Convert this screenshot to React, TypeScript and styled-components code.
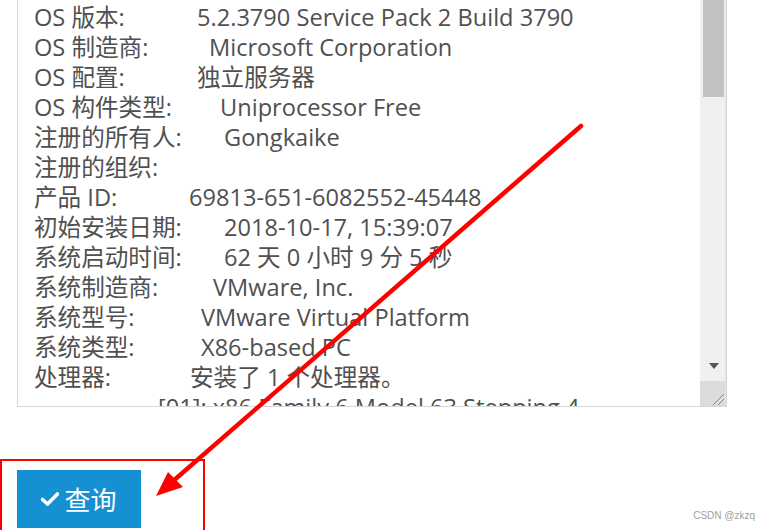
import React from "react";
import styled, { createGlobalStyle } from "styled-components";

const Global = createGlobalStyle`
  html, body { margin: 0; padding: 0; background: #fff; overflow: hidden; }
  body { width: 769px; height: 530px; }
`;

const Page = styled.div`
  position: relative;
  width: 769px;
  height: 530px;
  display: flex;
  flex-direction: column;
  font-family: "Open Sans", "Noto Sans CJK SC", sans-serif;
`;

const Panel = styled.div`
  box-sizing: border-box;
  margin-left: 17px;
  width: 710px;
  height: 407px;
  border: 1px solid #d6d6d6;
  border-top: 0;
  display: flex;
  background: #fff;
`;

const Lines = styled.div`
  flex: 1;
  overflow: hidden;
  padding: 2px 0 0 16px;
  color: #505050;
  font-size: 23.6px;
  line-height: 30px;
`;

const Row = styled.div`
  display: flex;
  white-space: nowrap;
  height: 30px;
`;

const Label = styled.span<{ $w: number }>`
  flex: 0 0 ${(p) => p.$w}px;
`;

const Value = styled.span``;

const Track = styled.div`
  width: 26px;
  background: #f0f0f0;
  display: flex;
  flex-direction: column;
  border-right: 1px solid #e3e3e3;
  box-sizing: border-box;
`;

const Thumb = styled.div`
  margin-left: 3px;
  width: 21px;
  height: 97px;
  background: #c1c1c1;
`;

const Spacer = styled.div`
  flex: 1;
`;

const ArrowBtn = styled.div`
  height: 20px;
  margin-bottom: 5px;
  display: flex;
  align-items: center;
  justify-content: center;
  padding-left: 2px;
`;

const Grip = styled.div`
  height: 25px;
  background: #dcdcdc;
  display: flex;
  align-items: flex-end;
  justify-content: flex-end;
`;

const ActionArea = styled.div`
  margin-top: 52px;
  box-sizing: border-box;
  width: 205px;
  height: 90px;
  border: 2px solid #ff0000;
  border-bottom: 0;
  padding: 9px 0 0 15px;
`;

const QueryButton = styled.button`
  width: 124px;
  height: 58px;
  border: 0;
  background: #1590d2;
  color: #fff;
  font-family: "Open Sans", "Noto Sans CJK SC", sans-serif;
  font-size: 26px;
  display: flex;
  align-items: center;
  justify-content: center;
  gap: 5px;
  padding: 0 0 0 0;
  cursor: pointer;
`;

const Overlay = styled.svg`
  position: absolute;
  left: 0;
  top: 0;
  pointer-events: none;
`;

const Watermark = styled.div`
  position: absolute;
  right: 14px;
  bottom: 9px;
  font-family: "Liberation Sans", sans-serif;
  font-size: 10px;
  color: #a0a0a0;
`;

const rows: [string, number, string][] = [
  ["OS 版本:", 163, "5.2.3790 Service Pack 2 Build 3790"],
  ["OS 制造商:", 175, "Microsoft Corporation"],
  ["OS 配置:", 163, "独立服务器"],
  ["OS 构件类型:", 186, "Uniprocessor Free"],
  ["注册的所有人:", 190, "Gongkaike"],
  ["注册的组织:", 190, ""],
  ["产品 ID:", 155, "69813-651-6082552-45448"],
  ["初始安装日期:", 190, "2018-10-17, 15:39:07"],
  ["系统启动时间:", 190, "62 天 0 小时 9 分 5 秒"],
  ["系统制造商:", 179, "VMware, Inc."],
  ["系统型号:", 167, "VMware Virtual Platform"],
  ["系统类型:", 167, "X86-based PC"],
  ["处理器:", 156, "安装了 1 个处理器。"],
  ["", 124, "[01]: x86 Family 6 Model 63 Stepping 4"],
];

export default function App() {
  return (
    <Page>
      <Global />
      <Panel>
        <Lines>
          {rows.map(([l, w, v], i) => (
            <Row key={i}>
              <Label $w={w}>{l}</Label>
              <Value>{v}</Value>
            </Row>
          ))}
        </Lines>
        <Track>
          <Thumb />
          <Spacer />
          <ArrowBtn>
            <svg width="10" height="6" viewBox="0 0 10 6">
              <polygon points="0,0 10,0 5,6" fill="#555" />
            </svg>
          </ArrowBtn>
          <Grip>
            <svg width="14" height="14" viewBox="0 0 14 14">
              <line x1="2" y1="13" x2="13" y2="2" stroke="#888" strokeWidth="1" />
              <line x1="7" y1="13" x2="13" y2="7" stroke="#888" strokeWidth="1" />
            </svg>
          </Grip>
        </Track>
      </Panel>
      <ActionArea>
        <QueryButton>
          <svg width="18" height="14" viewBox="0 0 18 14">
            <path d="M1.5 7.5 L6.5 12 L16.5 2" fill="none" stroke="#fff" strokeWidth="3.6" strokeLinecap="round" strokeLinejoin="round" />
          </svg>
          查询
        </QueryButton>
      </ActionArea>
      <Overlay width="769" height="530" viewBox="0 0 769 530">
        <line x1="581" y1="126" x2="172" y2="482" stroke="#ff0000" strokeWidth="4.5" strokeLinecap="round" />
        <polygon points="156,496 168,472 183,487" fill="#ff0000" />
      </Overlay>
      <Watermark>CSDN @zkzq</Watermark>
    </Page>
  );
}
